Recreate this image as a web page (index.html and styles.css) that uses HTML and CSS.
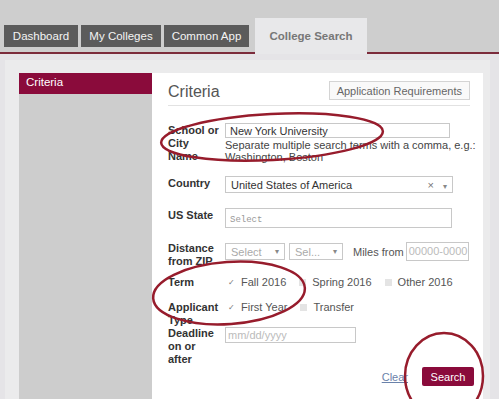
FILE: index.html
```html
<!DOCTYPE html>
<html lang="en">
  <head>
    <meta charset="UTF-8" />
    <title>College Search</title>
    <link rel="stylesheet" href="styles.css">
  </head>
  <body>
    <div class="topbar">
      <div class="tab tab-dash">Dashboard</div>
      <div class="tab tab-mine">My Colleges</div>
      <div class="tab tab-common">Common App</div>
      <div class="tab active">College Search</div>
    </div>

    <div class="page">
      <div class="panel">
        <div class="sidebar">
          <div class="side-item">Criteria</div>
        </div>

        <div class="main">
          <div class="head">
            <h1>Criteria</h1>
            <button class="btn-light">Application Requirements</button>
          </div>

          <div class="row row-school">
            <label>School or City Name</label>
            <div class="field">
              <input type="text" class="input input-school" value="New York University" />
              <div class="help">Separate multiple search terms with a comma, e.g.: Washington, Boston</div>
            </div>
          </div>

          <div class="row row-country">
            <label>Country</label>
            <div class="select select-country">
              <span>United States of America</span>
              <span class="sel-icons">× <span class="caret">▾</span></span>
            </div>
          </div>

          <div class="row row-state">
            <label>US State</label>
            <div class="input input-state"><span class="mono">Select</span></div>
          </div>

          <div class="row row-distance">
            <label>Distance from ZIP</label>
            <div class="inline">
              <div class="select select-sm select-a"><span>Select</span><span class="caret">▾</span></div>
              <div class="select select-sm select-b"><span>Sel...</span><span class="caret">▾</span></div>
              <span class="miles">Miles from</span>
              <div class="input input-zip">00000-0000</div>
            </div>
          </div>

          <div class="row row-term">
            <label>Term</label>
            <div class="options">
              <span class="opt"><span class="cb on">✓</span>Fall 2016</span>
              <span class="opt"><span class="cb"></span>Spring 2016</span>
              <span class="opt"><span class="cb"></span>Other 2016</span>
            </div>
          </div>

          <div class="row row-type">
            <label>Applicant Type</label>
            <div class="options">
              <span class="opt"><span class="cb on">✓</span>First Year</span>
              <span class="opt"><span class="cb"></span>Transfer</span>
            </div>
          </div>

          <div class="row row-deadline">
            <label>Deadline on or after</label>
            <div class="input input-date">mm/dd/yyyy</div>
          </div>

          <div class="actions">
            <a href="#" class="clear">Clear</a>
            <button class="btn-search">Search</button>
          </div>
        </div>
      </div>
    </div>

    <!-- hand drawn marks over the screenshot -->
    <svg class="marks" width="499" height="399" viewBox="0 0 499 399">
      <ellipse cx="272" cy="137" rx="111" ry="23" transform="rotate(-3 272 137)" />
      <ellipse cx="229" cy="293" rx="76" ry="31" transform="rotate(-4 229 293)" />
      <ellipse cx="444" cy="376" rx="39" ry="43" />
    </svg>
  </body>
</html>
```

FILE: styles.css
```css
body {
  margin: 0;
  width: 499px;
  height: 399px;
  overflow: hidden;
  font-family: "Liberation Sans", Arial, sans-serif;
  background-color: #e5e4e7;
  position: relative;
}
.topbar {
  display: flex;
  align-items: flex-end;
  gap: 3px;
  height: 52px;
  padding-left: 4px;
  background-color: #cecece;
  border-bottom: 2px solid #7b2b3b;
}
.tab {
  box-sizing: border-box;
  height: 22px;
  line-height: 22px;
  margin-bottom: 5px;
  background-color: #5b5b5b;
  color: #f4f4f4;
  font-size: 11.5px;
  text-align: center;
  white-space: nowrap;
}
.tab-dash {
  width: 74px;
}
.tab-mine {
  width: 80px;
}
.tab-common {
  width: 85px;
}
.tab.active {
  margin-left: 3px;
  margin-bottom: -2px;
  width: 112px;
  height: 36px;
  line-height: 36px;
  background-color: #e8e8ea;
  color: #777;
  font-weight: bold;
}
.page {
  padding: 6px 9px 0 5px;
}
.panel {
  display: flex;
  padding: 13px 7px 0 14px;
  height: 326px;
  background-color: #ebebec;
}
.sidebar {
  width: 133px;
  background-color: #cdcdcd;
}
.side-item {
  height: 21px;
  line-height: 19px;
  padding-left: 7px;
  background-color: #8a0b3b;
  color: white;
  font-size: 11.5px;
}
.main {
  width: 302px;
  padding: 8px 13px 0 16px;
  background-color: white;
  color: #333;
}
.head {
  display: flex;
  justify-content: space-between;
  align-items: flex-start;
  padding-bottom: 4px;
  border-bottom: 1px solid #e2e2e2;
  margin-bottom: 17px;
}
h1 {
  margin: 2px 0 0;
  font-size: 16px;
  font-weight: normal;
  color: #555;
}
.btn-light {
  height: 19px;
  padding: 0 7px;
  border: 1px solid #d4d4d4;
  background-color: #f9f9f9;
  color: #666;
  font-family: inherit;
  font-size: 11px;
}
.row {
  display: flex;
  align-items: flex-start;
}
.row label {
  width: 51px;
  margin-right: 6px;
  flex-shrink: 0;
  font-size: 11px;
  font-weight: bold;
  line-height: 13px;
  color: #333;
}
.field {
  width: 260px;
  flex-shrink: 0;
}
.row-school {
  margin-bottom: 13px;
}
.row-school label {
  padding-top: 1px;
}
.row-country {
  margin-bottom: 15px;
}
.row-country label,
.row-state label {
  padding-top: 1px;
}
.row-state {
  margin-bottom: 14px;
}
.row-distance {
  margin-bottom: 8px;
}
.row-term {
  margin-bottom: 12px;
}
.row-deadline {
  margin-bottom: 1px;
}
.input {
  box-sizing: border-box;
  border: 1px solid #c8c8c8;
  background: white;
  font-family: inherit;
  font-size: 11px;
  color: #333;
  padding: 0 4px;
}
.input-school {
  display: block;
  width: 225px;
  height: 15px;
  margin: 0;
  outline: none;
}
.help {
  font-size: 11px;
  line-height: 12px;
  color: #444;
  margin-top: 1px;
}
.select {
  display: flex;
  align-items: center;
  justify-content: space-between;
  box-sizing: border-box;
  height: 17px;
  padding: 0 5px;
  border: 1px solid #c8c8c8;
  font-size: 11px;
  color: #333;
}
.select-country {
  width: 228px;
}
.sel-icons {
  color: #777;
  font-size: 11px;
}
.caret {
  margin-left: 6px;
  font-size: 8px;
  color: #888;
}
.input-state {
  width: 227px;
  height: 20px;
  line-height: 18px;
}
.mono {
  font-family: "Liberation Mono", monospace;
  font-size: 9px;
  color: #999;
}
.inline {
  display: flex;
  align-items: center;
  white-space: nowrap;
}
.select-sm {
  color: #aaa;
}
.select-a {
  width: 60px;
  margin-right: 4px;
}
.select-b {
  width: 54px;
  margin-right: 10px;
}
.miles {
  font-size: 11px;
  color: #555;
  margin-right: 2px;
}
.input-zip {
  width: 63px;
  height: 19px;
  line-height: 17px;
  padding: 0 2px;
  color: #bbb;
}
.options {
  display: flex;
  gap: 13px;
  padding-left: 3px;
  font-size: 11px;
  line-height: 13px;
  color: #555;
  white-space: nowrap;
}
.opt {
  display: flex;
  align-items: center;
}
.cb {
  width: 7px;
  height: 7px;
  margin-right: 6px;
  background-color: #e4e4e4;
  font-size: 8px;
  line-height: 7px;
  text-align: center;
  color: #777;
}
.cb.on {
  background-color: transparent;
}
.input-date {
  width: 131px;
  height: 16px;
  line-height: 14px;
  padding: 0 2px;
  color: #bbb;
}
.actions {
  display: flex;
  justify-content: flex-end;
  align-items: center;
  gap: 14px;
  margin-right: -4px;
}
.clear {
  font-size: 11px;
  color: #6a82aa;
}
.btn-search {
  width: 52px;
  height: 19px;
  border: none;
  border-radius: 2px;
  background-color: #8a0b3b;
  color: white;
  font-family: inherit;
  font-size: 11px;
}
.marks {
  position: absolute;
  left: 0;
  top: 0;
  pointer-events: none;
}
.marks ellipse {
  fill: none;
  stroke: #971c2c;
  stroke-width: 2.5;
}
```
